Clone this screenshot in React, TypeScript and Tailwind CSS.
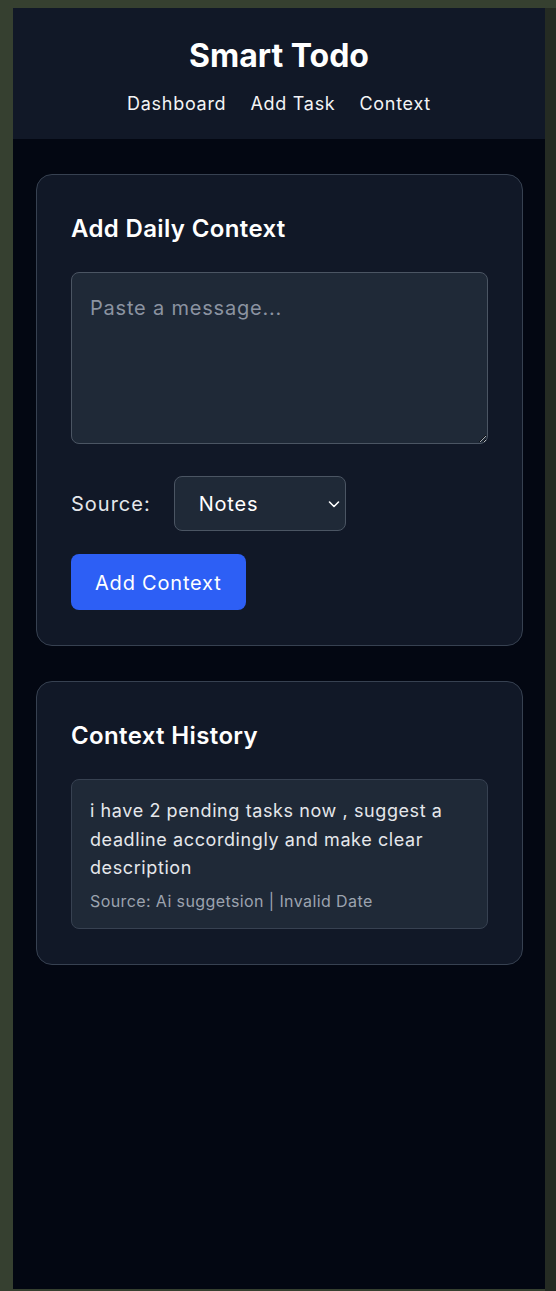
import { useState } from "react";

const font = { fontFamily: "Inter, 'Noto Sans', sans-serif" };

const history = [
  {
    text: "i have 2 pending tasks now , suggest a deadline accordingly and make clear description",
    source: "Ai suggetsion",
    date: "Invalid Date",
  },
];

function Card({ title, children }: { title: string; children: React.ReactNode }) {
  return (
    <section className="bg-[#111827] border border-[#374151] rounded-2xl px-[34px] pt-[38px] pb-[35px]">
      <h2 className="text-2xl leading-8 font-semibold tracking-[0.015em] text-white mb-[27px]">{title}</h2>
      {children}
    </section>
  );
}

export default function App() {
  const [message, setMessage] = useState("");
  const [source, setSource] = useState("Notes");

  return (
    <div className="h-[1291px] bg-[#364030] pt-[8px] pl-[13px] flex" style={font}>
      <div className="flex-1 h-[1281px] bg-[#030712] flex flex-col">
        <header className="bg-[#111827] h-[131px] flex flex-col items-center pt-[29px]">
          <h1 className="text-[32px] leading-[38px] font-bold text-white">Smart Todo</h1>
          <nav className="flex gap-6 mt-[15px] text-lg leading-7 tracking-[0.04em] text-[#f3f4f6]">
            <a href="#">Dashboard</a>
            <a href="#">Add Task</a>
            <a href="#">Context</a>
          </nav>
        </header>

        <main className="flex flex-col gap-[35px] pt-[35px] pl-[23px] pr-[22px]">
          <Card title="Add Daily Context">
            <textarea
              value={message}
              onChange={(e) => setMessage(e.target.value)}
              placeholder="Paste a message..."
              className="block w-full h-[172px] bg-[#1f2937] border border-[#4b5563] rounded-lg px-[18px] py-[21px] text-xl leading-7 tracking-[0.04em] text-white placeholder:text-[#8b93a1] outline-none"
            />
            <div className="flex items-center gap-[23px] mt-[32px]">
              <label className="text-xl tracking-[0.05em] text-[#e5e7eb]">Source:</label>
              <div className="relative">
                <select
                  value={source}
                  onChange={(e) => setSource(e.target.value)}
                  className="appearance-none w-[172px] h-[55px] bg-[#1f2937] border border-[#4b5563] rounded-lg pl-[24px] text-xl tracking-[0.04em] text-white outline-none"
                >
                  <option>Notes</option>
                  <option>Email</option>
                  <option>Slack</option>
                  <option>Ai suggetsion</option>
                </select>
                <svg
                  className="absolute right-[5px] top-1/2 -translate-y-1/2 pointer-events-none"
                  width="14"
                  height="14"
                  viewBox="0 0 14 14"
                  fill="none"
                  stroke="white"
                  strokeWidth="1.6"
                  strokeLinecap="round"
                  strokeLinejoin="round"
                >
                  <path d="M2.5 5l4.5 4.5L11.5 5" />
                </svg>
              </div>
            </div>
            <button className="mt-[23px] h-[56px] px-[24px] bg-[#2d5ff5] rounded-lg text-xl tracking-[0.04em] text-white">
              <span className="relative top-[1px]">Add Context</span>
            </button>
          </Card>

          <Card title="Context History">
            <ul className="flex flex-col gap-3">
              {history.map((h, i) => (
                <li
                  key={i}
                  className="bg-[#1f2937] border border-[#374151] rounded-lg px-[18px] pt-[17px] pb-[15px]"
                >
                  <p className="text-lg leading-[28.5px] tracking-[0.033em] text-[#e5e7eb]">{h.text}</p>
                  <p className="mt-[6px] text-base leading-6 tracking-[0.025em] text-[#9ca3af]">
                    Source: {h.source} | {h.date}
                  </p>
                </li>
              ))}
            </ul>
          </Card>
        </main>
      </div>
      <div className="w-[11px] h-[1283px] bg-[#252b23]" />
    </div>
  );
}
